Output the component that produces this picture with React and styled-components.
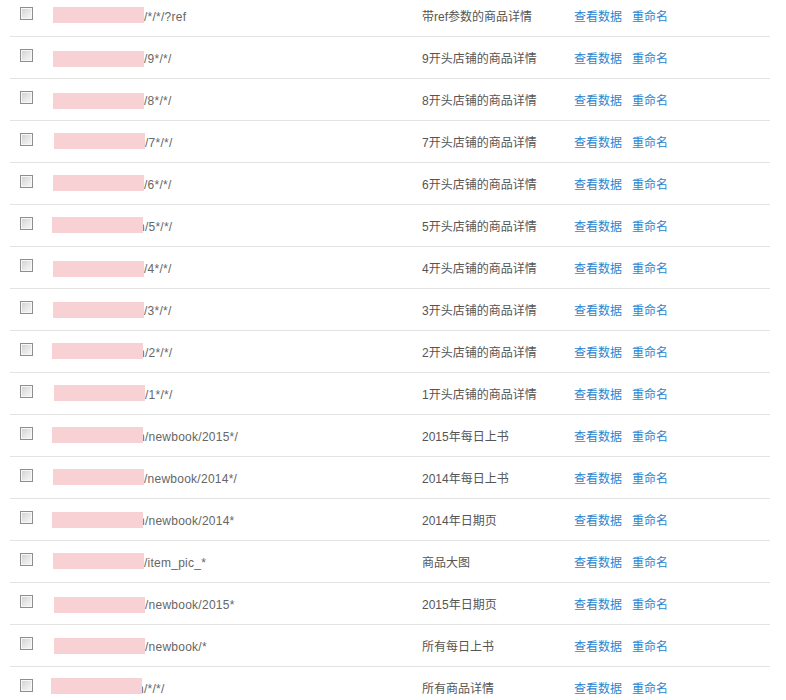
import React from 'react';
import styled, { createGlobalStyle } from 'styled-components';

const GlobalStyle = createGlobalStyle`
  body {
    margin: 0;
    background: #fff;
    font-family: "Liberation Sans", Arial, "Noto Sans CJK SC", sans-serif;
    font-size: 12px;
    color: #555;
    overflow: hidden;
  }
`;

const Page = styled.div`
  width: 760px;
  padding-left: 10px;
  /* list is scrolled a few pixels, so the first row is cut at the top */
  margin-top: -5px;
`;

const Row = styled.div`
  display: grid;
  grid-template-columns: 43px 369px 152px 58px 1fr;
  height: 41px;
  border-bottom: 1px solid #e3e3e3;
`;

const CheckCell = styled.div`
  padding: 12px 0 0 10px;
`;

const CheckBox = styled.span`
  display: block;
  width: 13px;
  height: 13px;
  box-sizing: border-box;
  border: 1px solid #8e8e8e;
  box-shadow: inset 0 0 0 1px #f7f7f7;
  background: linear-gradient(135deg, #cfcfcf 0%, #e6e6e6 50%, #f8f8f8 100%);
`;

const PathCell = styled.div`
  display: flex;
  align-items: flex-start;
  padding-top: 14px;
  line-height: 16px;
  white-space: nowrap;
`;

// pink block hiding the domain, drawn over the first letters of the path
const Redact = styled.span`
  position: relative;
  z-index: 1;
  flex: none;
  width: 91px;
  height: 16px;
  background: #f7d1d3;
  margin-left: ${p => p.$dx}px;
  margin-top: ${p => p.$dy - 1}px;
  margin-right: ${p => (p.$cut ? -5 : 0)}px;
`;

const PathText = styled.span`
  color: #666;
  letter-spacing: 0.25px;
`;

const Cell = styled.div`
  padding-top: 14px;
  line-height: 16px;
  white-space: nowrap;
`;

const Link = styled.a`
  color: #2a86d2;
  text-decoration: none;
  cursor: pointer;
`;

const rows = [
  { path: '/*/*/?ref', desc: '带ref参数的商品详情', dx: 0, dy: -1 },
  { path: '/9*/*/', desc: '9开头店铺的商品详情', dx: 0, dy: 1 },
  { path: '/8*/*/', desc: '8开头店铺的商品详情', dx: 0, dy: 1 },
  { path: '/7*/*/', desc: '7开头店铺的商品详情', dx: 1, dy: -1 },
  { path: '/6*/*/', desc: '6开头店铺的商品详情', dx: 0, dy: -1 },
  { path: '/5*/*/', desc: '5开头店铺的商品详情', dx: -1, dy: -1, cut: true },
  { path: '/4*/*/', desc: '4开头店铺的商品详情', dx: 0, dy: 1 },
  { path: '/3*/*/', desc: '3开头店铺的商品详情', dx: 0, dy: 0 },
  { path: '/2*/*/', desc: '2开头店铺的商品详情', dx: -1, dy: -1, cut: true },
  { path: '/1*/*/', desc: '1开头店铺的商品详情', dx: 1, dy: -1 },
  { path: '/newbook/2015*/', desc: '2015年每日上书', dx: -1, dy: -1, cut: true },
  { path: '/newbook/2014*/', desc: '2014年每日上书', dx: 0, dy: -1 },
  { path: '/newbook/2014*', desc: '2014年日期页', dx: -1, dy: 0, cut: true },
  { path: '/item_pic_*', desc: '商品大图', dx: 0, dy: -1 },
  { path: '/newbook/2015*', desc: '2015年日期页', dx: 1, dy: 1 },
  { path: '/newbook/*', desc: '所有每日上书', dx: 1, dy: 0 },
  { path: '/*/*/', desc: '所有商品详情', dx: -2, dy: -2, cut: true },
];

export default function App() {
  return (
    <>
      <GlobalStyle />
      <Page>
        {rows.map((row, i) => (
          <Row key={i}>
            <CheckCell>
              <CheckBox />
            </CheckCell>
            <PathCell>
              <Redact $dx={row.dx} $dy={row.dy} $cut={row.cut} />
              <PathText>{row.cut ? 'n' + row.path : row.path}</PathText>
            </PathCell>
            <Cell>{row.desc}</Cell>
            <Cell>
              <Link>查看数据</Link>
            </Cell>
            <Cell>
              <Link>重命名</Link>
            </Cell>
          </Row>
        ))}
      </Page>
    </>
  );
}
